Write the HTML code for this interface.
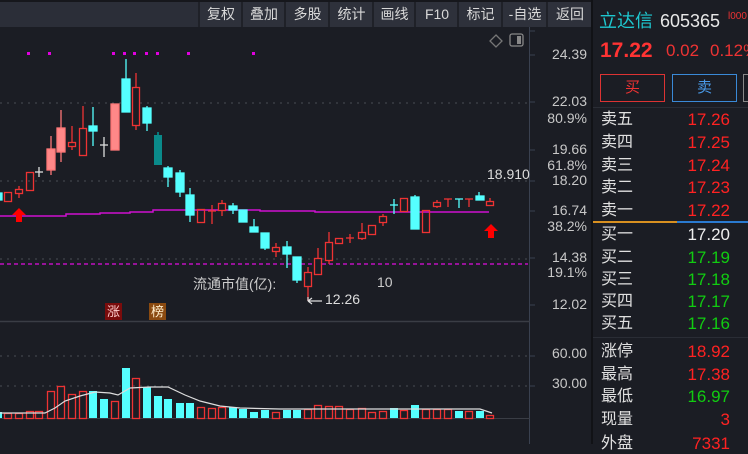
<!DOCTYPE html>
<html><head><meta charset="utf-8"><style>
body{margin:0;background:#1b1d24;width:748px;height:444px;overflow:hidden;position:relative;font-family:"Liberation Sans","Noto Sans CJK SC",sans-serif}
.tb{position:absolute;top:0;left:0;width:592px;height:27px;background:#2b2e38;border-top:2px solid #16171c;box-sizing:border-box}
.btn{position:absolute;top:2px;height:25px;background:#2e313b;color:#d8d8d8;font-size:14px;line-height:25px;text-align:center;border-left:2px solid #1f2128}
.r{position:absolute;white-space:nowrap}
.rows .r{line-height:20px;height:20px}
</style></head><body>
<div class="tb"></div>
<div class="btn" style="left:198px;width:42px">复权</div>
<div class="btn" style="left:241px;width:42px">叠加</div>
<div class="btn" style="left:284px;width:43px">多股</div>
<div class="btn" style="left:328px;width:43px">统计</div>
<div class="btn" style="left:372px;width:41px">画线</div>
<div class="btn" style="left:414px;width:42px">F10</div>
<div class="btn" style="left:457px;width:43px">标记</div>
<div class="btn" style="left:501px;width:44px">-自选</div>
<div class="btn" style="left:546px;width:44px">返回</div>

<svg style="position:absolute;left:0;top:0" width="592" height="444">
<g stroke="#4a4d55" stroke-dasharray="2 5" stroke-width="1">
<line x1="0" y1="103" x2="528" y2="103"/><line x1="0" y1="181" x2="528" y2="181"/><line x1="0" y1="259" x2="528" y2="259"/>
<line x1="0" y1="356" x2="528" y2="356"/><line x1="0" y1="386" x2="528" y2="386"/>
</g>
<line x1="529.5" y1="27" x2="529.5" y2="444" stroke="#3a4150"/>
<line x1="0" y1="321.5" x2="530" y2="321.5" stroke="#3a3d45" stroke-width="1.5"/>
<line x1="0" y1="418.5" x2="530" y2="418.5" stroke="#3a3d45"/>
<g stroke="#3a4150"><line x1="529" y1="55" x2="535" y2="55"/><line x1="529" y1="102" x2="535" y2="102"/><line x1="529" y1="150" x2="535" y2="150"/><line x1="529" y1="181" x2="535" y2="181"/><line x1="529" y1="211" x2="535" y2="211"/><line x1="529" y1="258" x2="535" y2="258"/><line x1="529" y1="305" x2="535" y2="305"/><line x1="529" y1="356" x2="535" y2="356"/><line x1="529" y1="386" x2="535" y2="386"/><line x1="529" y1="31" x2="535" y2="31"/></g>
<path d="M496 35 L502 41 L496 47 L490 41 Z" fill="none" stroke="#777" stroke-width="1.3"/>
<rect x="510" y="34" width="13" height="12" rx="2" fill="none" stroke="#888" stroke-width="1.3"/><rect x="517" y="36" width="4" height="8" fill="#888"/>
<g fill="#e000e0"><rect x="27" y="52" width="3" height="3"/><rect x="48" y="52" width="3" height="3"/><rect x="112" y="52" width="3" height="3"/><rect x="123" y="52" width="3" height="3"/><rect x="133" y="52" width="3" height="3"/><rect x="145" y="52" width="3" height="3"/><rect x="156" y="52" width="3" height="3"/><rect x="187" y="52" width="3" height="3"/><rect x="252" y="52" width="3" height="3"/></g>
<polyline points="0,216 66,216 66,214 100,214 100,213 130,213 130,212 153,212 153,210 260,210 260,211 315,211 315,212 489,212" fill="none" stroke="#d010d0" stroke-width="1.5"/>
<line x1="0" y1="264" x2="528" y2="264" stroke="#c010c0" stroke-dasharray="4 3" stroke-width="1.5"/>
<g stroke-width="1.3">
<rect x="-3" y="193" width="5" height="7" fill="#5ff" stroke="#5ff"/>
<g stroke="#e33" fill="none">
<rect x="4.5" y="192.5" width="7" height="9"/>
<line x1="19" y1="186" x2="19" y2="198"/><rect x="15.5" y="189.5" width="7" height="4" fill="#1b1d24"/>
<rect x="26.5" y="172.5" width="7" height="18"/>
<line x1="72" y1="126" x2="72" y2="150"/><rect x="68.5" y="142.5" width="7" height="4" fill="#1b1d24"/>
<line x1="83" y1="106" x2="83" y2="128"/><rect x="79.5" y="128.5" width="7" height="27"/>
<line x1="136" y1="73" x2="136" y2="130"/><rect x="132.5" y="87.5" width="7" height="38" fill="#1b1d24"/>
<rect x="197.5" y="209.5" width="7" height="13"/>
<line x1="212" y1="205" x2="212" y2="224"/><line x1="208" y1="211" x2="216" y2="211"/>
<line x1="222" y1="200" x2="222" y2="216"/><rect x="218.5" y="203.5" width="7" height="7" fill="#1b1d24"/>
<line x1="276" y1="243" x2="276" y2="257"/><rect x="272.5" y="247.5" width="7" height="4" fill="#1b1d24"/>
<line x1="308" y1="267" x2="308" y2="301"/><rect x="304.5" y="272.5" width="7" height="14" fill="#1b1d24"/>
<line x1="318" y1="248" x2="318" y2="275"/><rect x="314.5" y="258.5" width="7" height="16" fill="#1b1d24"/>
<line x1="329" y1="232" x2="329" y2="264"/><rect x="325.5" y="242.5" width="7" height="18" fill="#1b1d24"/>
<rect x="335.5" y="238.5" width="7" height="5"/>
<line x1="350" y1="234" x2="350" y2="243"/><line x1="346" y1="238" x2="354" y2="238"/>
<line x1="362" y1="223" x2="362" y2="240"/><rect x="358.5" y="232.5" width="7" height="6" fill="#1b1d24"/>
<rect x="368.5" y="225.5" width="7" height="9"/>
<line x1="383" y1="214" x2="383" y2="226"/><rect x="379.5" y="216.5" width="7" height="6" fill="#1b1d24"/>
<rect x="400.5" y="198.5" width="7" height="13"/>
<rect x="422.5" y="210.5" width="7" height="22"/>
<line x1="437" y1="200" x2="437" y2="208"/><rect x="433.5" y="202.5" width="7" height="4" fill="#1b1d24"/>
<line x1="448" y1="199" x2="448" y2="207"/><line x1="444" y1="199" x2="452" y2="199"/>
<line x1="469" y1="199" x2="469" y2="207"/><line x1="465" y1="199" x2="473" y2="199"/>
<line x1="490" y1="198" x2="490" y2="202"/><rect x="486.5" y="201.5" width="7" height="4"/>
</g>
<g stroke="#f77" fill="#f88">
<line x1="51" y1="136" x2="51" y2="175"/><rect x="47" y="149" width="8" height="21"/>
<line x1="61" y1="110" x2="61" y2="162"/><rect x="57" y="128" width="8" height="24"/>
<rect x="111" y="104" width="8" height="46"/>
</g>
<g stroke="#5ff" fill="#5ff">
<line x1="93" y1="107" x2="93" y2="146"/><rect x="89" y="126" width="8" height="5"/>
<line x1="126" y1="59" x2="126" y2="112"/><rect x="122" y="79" width="8" height="33"/>
<line x1="147" y1="106" x2="147" y2="131"/><rect x="143" y="108" width="8" height="15"/>
<line x1="168" y1="166" x2="168" y2="187"/><rect x="164" y="168" width="8" height="9"/>
<line x1="180" y1="170" x2="180" y2="197"/><rect x="176" y="173" width="8" height="19"/>
<line x1="190" y1="188" x2="190" y2="222"/><rect x="186" y="195" width="8" height="20"/>
<line x1="233" y1="203" x2="233" y2="214"/><rect x="229" y="206" width="8" height="4"/>
<rect x="239" y="210" width="8" height="12"/>
<line x1="254" y1="219" x2="254" y2="232"/><rect x="250" y="227" width="8" height="5"/>
<line x1="265" y1="233" x2="265" y2="250"/><rect x="261" y="233" width="8" height="15"/>
<line x1="287" y1="241" x2="287" y2="268"/><rect x="283" y="247" width="8" height="7"/>
<line x1="297" y1="257" x2="297" y2="283"/><rect x="293" y="257" width="8" height="23"/>
<line x1="394" y1="199" x2="394" y2="214"/><line x1="390" y1="205" x2="398" y2="205"/>
<line x1="415" y1="195" x2="415" y2="229"/><rect x="411" y="197" width="8" height="32"/>
<line x1="459" y1="199" x2="459" y2="208"/><line x1="455" y1="199" x2="463" y2="199"/>
<line x1="479" y1="192" x2="479" y2="200"/><rect x="476" y="196" width="8" height="4"/>
</g>
<g fill="none"><line x1="104" y1="137" x2="104" y2="157" stroke="#ddd"/><line x1="100" y1="145" x2="108" y2="145" stroke="#ddd"/>
<line x1="39" y1="167" x2="39" y2="177" stroke="#ddd"/><line x1="35" y1="172" x2="43" y2="172" stroke="#ddd"/></g>
<line x1="158" y1="132" x2="158" y2="135" stroke="#0aa"/><rect x="154" y="135" width="8" height="30" fill="#0a8a8a"/>
</g>
<path d="M19 208 L26 215 L22 215 L22 222 L16 222 L16 215 L12 215 Z" fill="#f00"/>
<path d="M491 224 L498 231 L494 231 L494 238 L488 238 L488 231 L484 231 Z" fill="#f00"/>
<path d="M308 301 L308 297 M308 301 L322 301 M308 301 L312 298 M308 301 L312 304" stroke="#ddd" fill="none" stroke-width="1.2"/>
<g stroke-width="1.3">
<g fill="#5ff">
<rect x="-3" y="412" width="5" height="6"/><rect x="89" y="391" width="8" height="27"/><rect x="100" y="399" width="8" height="19"/><rect x="122" y="368" width="8" height="50"/><rect x="143" y="387" width="8" height="31"/><rect x="154" y="396" width="8" height="22"/><rect x="164" y="399" width="8" height="19"/><rect x="176" y="403" width="8" height="15"/><rect x="186" y="403" width="8" height="15"/><rect x="229" y="407" width="8" height="11"/><rect x="239" y="409" width="8" height="9"/><rect x="250" y="412" width="8" height="6"/><rect x="261" y="410" width="8" height="8"/><rect x="283" y="410" width="8" height="8"/><rect x="293" y="410" width="8" height="8"/><rect x="390" y="408" width="8" height="10"/><rect x="411" y="405" width="8" height="13"/><rect x="455" y="411" width="8" height="7"/><rect x="476" y="411" width="8" height="7"/>
</g>
<g stroke="#e33" fill="none">
<rect x="4.5" y="413.5" width="7" height="5"/><rect x="15.5" y="413.5" width="7" height="5"/><rect x="26.5" y="411.5" width="7" height="7"/><rect x="35.5" y="411.5" width="7" height="7"/><rect x="47.5" y="391.5" width="7" height="27"/><rect x="57.5" y="386.5" width="7" height="32"/><rect x="68.5" y="394.5" width="7" height="24"/><rect x="79.5" y="391.5" width="7" height="27"/><rect x="111.5" y="401.5" width="7" height="17"/><rect x="132.5" y="378.5" width="7" height="40"/><rect x="197.5" y="407.5" width="7" height="11"/><rect x="208.5" y="408.5" width="7" height="10"/><rect x="218.5" y="407.5" width="7" height="11"/><rect x="272.5" y="412.5" width="7" height="6"/><rect x="304.5" y="409.5" width="7" height="9"/><rect x="314.5" y="405.5" width="7" height="13"/><rect x="325.5" y="406.5" width="7" height="12"/><rect x="335.5" y="406.5" width="7" height="12"/><rect x="346.5" y="409.5" width="7" height="9"/><rect x="358.5" y="408.5" width="7" height="10"/><rect x="368.5" y="412.5" width="7" height="6"/><rect x="379.5" y="411.5" width="7" height="7"/><rect x="400.5" y="410.5" width="7" height="8"/><rect x="422.5" y="409.5" width="7" height="9"/><rect x="433.5" y="409.5" width="7" height="9"/><rect x="444.5" y="409.5" width="7" height="9"/><rect x="465.5" y="411.5" width="7" height="7"/><rect x="486.5" y="415.5" width="7" height="3"/>
</g>
</g>
<polyline points="0,413 45,413 55,408 65,401 80,396 95,392 110,393 118,395 130,388 150,387 168,387 185,395 200,401 220,406 240,408 280,409 340,409 400,409 480,409 492,413" fill="none" stroke="#ddd" stroke-width="1.2"/>
</svg>

<div class="r" style="left:487px;top:166px;color:#ddd;font-size:14px">18.910</div>
<div class="r" style="left:193px;top:274px;color:#ccc;font-size:14px">流通市值(亿):</div>
<div class="r" style="left:377px;top:274px;color:#ccc;font-size:14px">10</div>
<div class="r" style="left:325px;top:291px;color:#ddd;font-size:14px">12.26</div>
<div class="r" style="left:105px;top:303px;width:17px;height:17px;background:#7a0c0c;color:#fcc;font-size:13px;line-height:17px;text-align:center">涨</div>
<div class="r" style="left:149px;top:303px;width:17px;height:17px;background:#8a4a10;color:#fec;font-size:13px;line-height:17px;text-align:center">榜</div>

<div style="position:absolute;left:535px;top:0;width:52px;font-size:14px;color:#c8c8c8;text-align:right">
<div class="r" style="right:0;top:46px">24.39</div>
<div class="r" style="right:0;top:93px">22.03</div>
<div class="r" style="right:0;top:110px">80.9%</div>
<div class="r" style="right:0;top:141px">19.66</div>
<div class="r" style="right:0;top:157px">61.8%</div>
<div class="r" style="right:0;top:172px">18.20</div>
<div class="r" style="right:0;top:202px">16.74</div>
<div class="r" style="right:0;top:218px">38.2%</div>
<div class="r" style="right:0;top:249px">14.38</div>
<div class="r" style="right:0;top:264px">19.1%</div>
<div class="r" style="right:0;top:296px">12.02</div>
<div class="r" style="right:0;top:345px">60.00</div>
<div class="r" style="right:0;top:375px">30.00</div>
</div>

<div style="position:absolute;left:591px;top:0;width:2px;height:444px;background:#111216"></div>
<div class="r" style="left:599px;top:9px;font-size:18px;color:#1ec8d0;line-height:24px">立达信</div>
<div class="r" style="left:660px;top:9px;font-size:18px;color:#e8e8e8;line-height:24px">605365</div>
<div class="r" style="left:728px;top:11px;font-size:10px;color:#e33">l000</div>
<div class="r" style="left:600px;top:39px;font-size:21px;color:#f33;font-weight:bold">17.22</div>
<div class="r" style="left:666px;top:41px;font-size:17px;color:#e33">0.02</div>
<div class="r" style="left:710px;top:41px;font-size:17px;color:#e33">0.12%</div>
<div class="r" style="left:600px;top:74px;width:63px;height:26px;border:1px solid #d33;color:#e33;font-size:15px;line-height:26px;text-align:center">买</div>
<div class="r" style="left:672px;top:74px;width:63px;height:26px;border:1px solid #3a8ad8;color:#4a9ae8;font-size:15px;line-height:26px;text-align:center">卖</div>
<div class="r" style="left:743px;top:74px;width:10px;height:26px;border:1px solid #888"></div>
<div class="r" style="left:593px;top:107px;width:155px;height:1px;background:#2a2d35"></div>
<div class="rows" style="position:absolute;left:601px;top:0;font-size:16px;color:#e0e0e0">
<div class="r" style="top:110px">卖五</div><div class="r" style="top:133px">卖四</div><div class="r" style="top:156px">卖三</div><div class="r" style="top:178px">卖二</div><div class="r" style="top:201px">卖一</div>
<div class="r" style="top:225px">买一</div><div class="r" style="top:248px">买二</div><div class="r" style="top:270px">买三</div><div class="r" style="top:292px">买四</div><div class="r" style="top:314px">买五</div>
<div class="r" style="top:342px">涨停</div><div class="r" style="top:365px">最高</div><div class="r" style="top:387px">最低</div><div class="r" style="top:410px">现量</div><div class="r" style="top:434px">外盘</div>
</div>
<div class="rows" style="position:absolute;left:660px;width:70px;top:0;font-size:17px;text-align:right">
<div class="r" style="right:0;top:110px;color:#f22">17.26</div><div class="r" style="right:0;top:133px;color:#f22">17.25</div><div class="r" style="right:0;top:156px;color:#f22">17.24</div><div class="r" style="right:0;top:178px;color:#f22">17.23</div><div class="r" style="right:0;top:201px;color:#f22">17.22</div>
<div class="r" style="right:0;top:225px;color:#eee">17.20</div><div class="r" style="right:0;top:248px;color:#1c1">17.19</div><div class="r" style="right:0;top:270px;color:#1c1">17.18</div><div class="r" style="right:0;top:292px;color:#1c1">17.17</div><div class="r" style="right:0;top:314px;color:#1c1">17.16</div>
<div class="r" style="right:0;top:342px;color:#f22">18.92</div><div class="r" style="right:0;top:365px;color:#f22">17.38</div><div class="r" style="right:0;top:387px;color:#1c1">16.97</div><div class="r" style="right:0;top:410px;color:#f22">3</div><div class="r" style="right:0;top:434px;color:#f22">7331</div>
</div>
<div class="r" style="left:593px;top:221px;width:84px;height:2px;background:#d89020"></div>
<div class="r" style="left:677px;top:221px;width:71px;height:2px;background:#2a7ad0"></div>
<div class="r" style="left:593px;top:337px;width:155px;height:1px;background:#2a2d35"></div>
</body></html>
